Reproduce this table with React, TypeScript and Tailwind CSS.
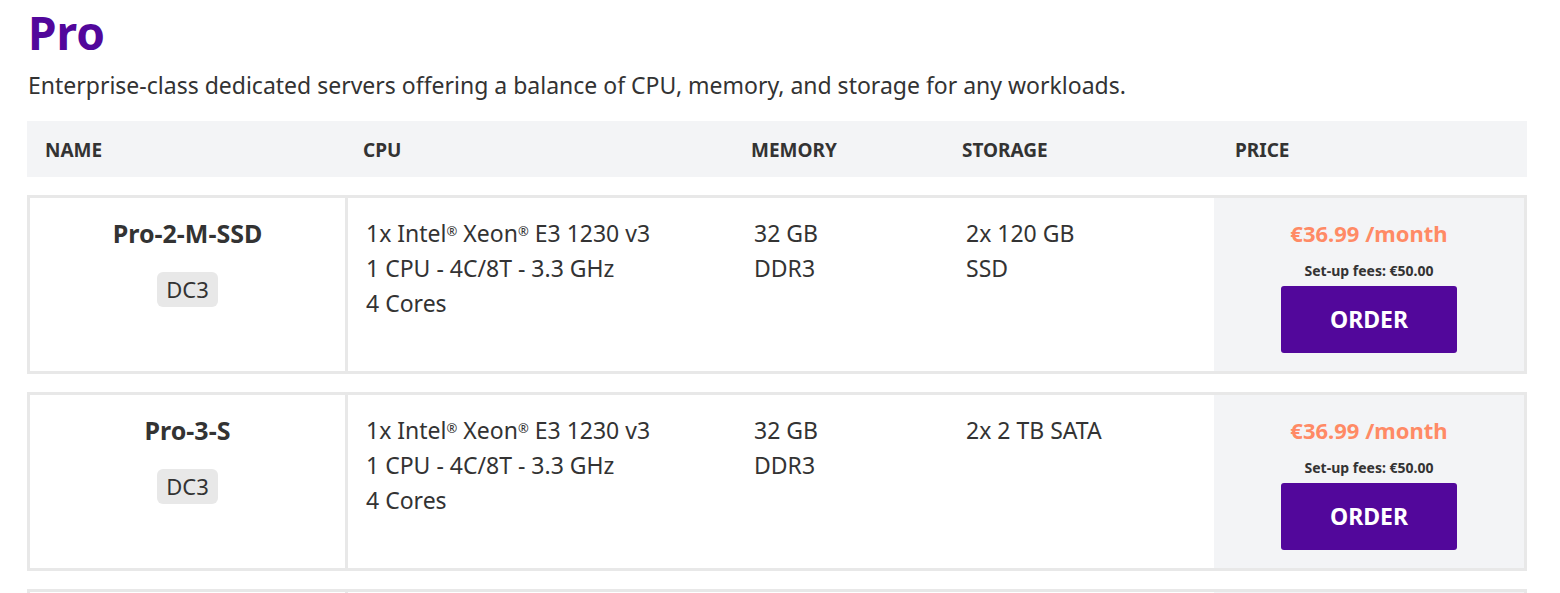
import React from "react";

interface Server {
  name: string;
  dc: string;
  cpu: string[];
  memory: string[];
  storage: string[];
  price: string;
  setup: string;
}

const servers: Server[] = [
  {
    name: "Pro-2-M-SSD",
    dc: "DC3",
    cpu: ["1x Intel® Xeon® E3 1230 v3", "1 CPU - 4C/8T - 3.3 GHz", "4 Cores"],
    memory: ["32 GB", "DDR3"],
    storage: ["2x 120 GB", "SSD"],
    price: "€36.99 /month",
    setup: "Set-up fees: €50.00",
  },
  {
    name: "Pro-3-S",
    dc: "DC3",
    cpu: ["1x Intel® Xeon® E3 1230 v3", "1 CPU - 4C/8T - 3.3 GHz", "4 Cores"],
    memory: ["32 GB", "DDR3"],
    storage: ["2x 2 TB SATA"],
    price: "€36.99 /month",
    setup: "Set-up fees: €50.00",
  },
  {
    name: "Pro-4-M",
    dc: "DC3",
    cpu: ["1x Intel® Xeon® E3 1240 v3", "1 CPU - 4C/8T - 3.4 GHz", "4 Cores"],
    memory: ["32 GB", "DDR3"],
    storage: ["2x 2 TB SATA"],
    price: "€42.99 /month",
    setup: "Set-up fees: €50.00",
  },
];

// renders the ® marks as small superscripts
const withReg = (text: string) =>
  text.split("®").map((part, i, arr) => (
    <React.Fragment key={i}>
      {part}
      {i < arr.length - 1 && <sup className="text-[13px]">®</sup>}
    </React.Fragment>
  ));

const headers = ["Name", "CPU", "Memory", "Storage", "Price"];

const App = () => {
  return (
    <div className="min-h-screen bg-white pl-[27px] pr-[33px] font-['Noto_Sans',sans-serif] text-[#333]">
      <h1 className="pt-[9px] pl-px text-[46px] font-bold leading-none text-[#52079b]">Pro</h1>
      <p className="mt-[14px] pl-px text-[23px] leading-[32px]">
        Enterprise-class dedicated servers offering a balance of CPU, memory, and storage for any workloads.
      </p>

      {/* table header */}
      <div className="mt-[20px] grid h-[56px] grid-cols-[318px_388px_211px_273px_1fr] items-center bg-[#f3f4f6]">
        {headers.map((h) => (
          <div key={h} className="pl-[18px] pt-[2px] text-[19px] font-bold uppercase">
            {h}
          </div>
        ))}
      </div>

      {/* rows */}
      <div className="mt-[18px] flex flex-col gap-[18px]">
        {servers.map((s) => (
          <div
            key={s.name}
            className="grid grid-cols-[318px_388px_212px_266px_1fr] border-[3px] border-[#e8e8e8] text-[23px] leading-[35px]"
          >
            <div className="flex flex-col items-center border-r-[3px] border-[#e8e8e8] pt-[18px]">
              <div className="text-[25px] font-bold">{s.name}</div>
              <div className="mt-[21px] h-[35px] rounded-[6px] bg-[#e8e8e8] px-[9px] text-[22px]">{s.dc}</div>
            </div>
            <div className="pl-[18px] pt-[18px]">
              {s.cpu.map((l) => (
                <div key={l}>{withReg(l)}</div>
              ))}
            </div>
            <div className="pl-[18px] pt-[18px]">
              {s.memory.map((l) => (
                <div key={l}>{l}</div>
              ))}
            </div>
            <div className="pl-[18px] pt-[18px]">
              {s.storage.map((l) => (
                <div key={l}>{l}</div>
              ))}
            </div>
            <div className="flex flex-col items-center bg-[#f3f4f6] pt-[18px] pb-[18px]">
              <div className="text-[22px] font-bold text-[#ff8a65]">{s.price}</div>
              <div className="mt-[11px] mb-[6px] text-[14px] font-bold leading-[18px]">{s.setup}</div>
              <button className="flex h-[67px] w-[176px] items-center justify-center rounded-[3px] bg-[#52079b] text-[23px] font-bold text-white">
                ORDER
              </button>
            </div>
          </div>
        ))}
      </div>
    </div>
  );
};

export default App;
